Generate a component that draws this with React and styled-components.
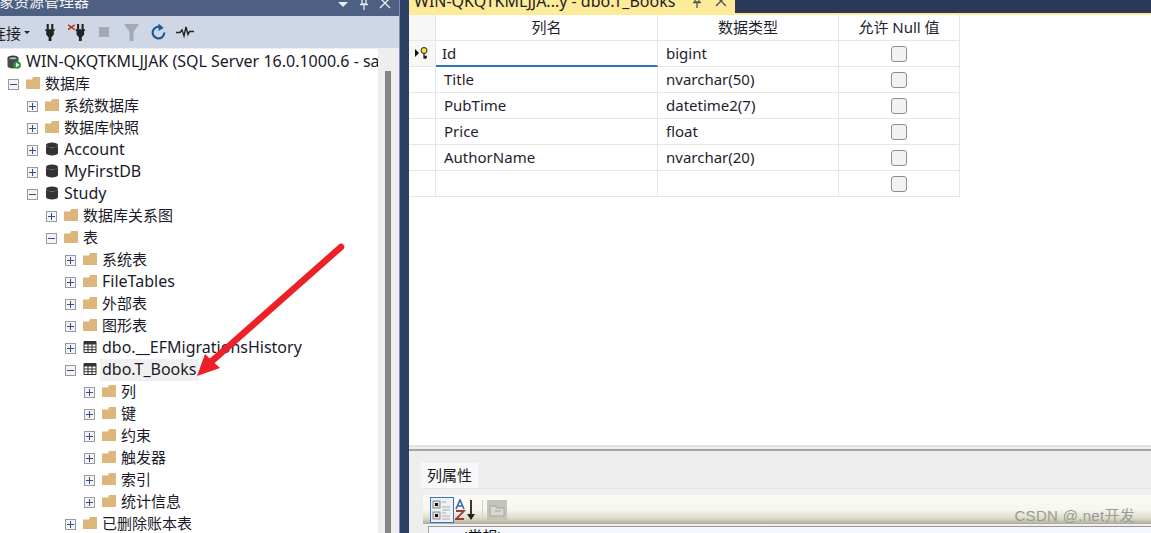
import React from "react";
import styled, { createGlobalStyle } from "styled-components";

const FONT = `"Noto Sans", "Noto Sans CJK SC", sans-serif`;
const Global = createGlobalStyle`
  html, body { margin: 0; padding: 0; background: #fff; overflow: hidden; }
  * { box-sizing: border-box; }
`;
const Page = styled.div`
  position: relative; display: flex; width: 1151px; height: 533px; overflow: hidden;
  font-family: ${FONT}; color: #1c1c1c; background: #2c3d5e;
`;
const Left = styled.aside`
  width: 400px; display: flex; flex-direction: column; border-right: 1px solid #7e8bab; background: #eeeeee;
`;
const TitleBar = styled.div`
  height: 16px; flex: none; background: #4d6082; color: #fff; display: flex; align-items: center;
  justify-content: space-between; overflow: hidden; font-size: 15px; line-height: 16px;
`;
const TitleText = styled.span`margin: -14px 0 0 -1px; color: #f0f2f6; white-space: nowrap;`;
const TitleBtns = styled.span`display: flex; align-items: flex-start; gap: 9px; margin: -6px 8px 0 0; height: 16px; color: #e8ebf2;`;
const Toolbar = styled.div`
  height: 32px; flex: none; background: #cfd6e5; display: flex; align-items: center; overflow: hidden;
`;
const Connect = styled.span`margin: 1px 3px 0 -9px; width: 30px; font-size: 15px; white-space: nowrap;`;
const Caret = styled.span`
  width: 0; height: 0; border-left: 3.5px solid transparent; border-right: 3.5px solid transparent;
  border-top: 3.5px solid #222; margin-right: 15px;
`;
const ToolIcon = styled.svg`flex: none; margin-right: ${p => p.$gap}px; display: block;`;
const TreeWrap = styled.div`flex: 1; display: flex; min-height: 0; margin-top: 1px;`;
const Tree = styled.div`width: 378px; background: #fff; padding-top: 2px; overflow: hidden;`;
const Scroll = styled.div`flex: 1; background: #eeeeee; padding: 22px 8px 0 7px;`;
const Thumb = styled.div`background: #868686; height: 100%;`;
const Row = styled.div`
  height: 22px; display: flex; align-items: center; white-space: nowrap;
  padding-left: ${p => p.$level * 19 - 11}px; color: #1a1a2a;
`;
const ServerRow = styled(Row)`padding-left: 7px;`;
const Expander = styled.span`
  width: 11px; height: 11px; flex: none; margin-right: 7px; border: 1px solid #9a9a9a; background: #f4f4f6;
  position: relative;
  &::before { content: ""; position: absolute; left: 1px; right: 1px; top: 4px; height: 1px; background: #2f4f8f; }
  &::after { content: ${p => (p.$open ? "none" : '""')}; position: absolute; top: 1px; bottom: 1px; left: 4px; width: 1px; background: #2f4f8f; }
`;
const NodeIcon = styled.svg`flex: none; width: 14px; height: 14px; margin: ${p => (p.$server ? "0 5px 0 0" : "-2px 5px 0 0")}; display: block;`;
const NodeText = styled.span`
  height: 22px; line-height: 21px; font-size: ${p => (p.$latin ? 16 : 15)}px;
  padding: 0 2px; margin-left: -2px;
  background: ${p => (p.$hl ? "#f0f0f0" : "transparent")};
`;
const Splitter = styled.div`width: 9px; flex: none; background: #2c3f63;`;
const Main = styled.main`flex: 1; display: flex; flex-direction: column; min-width: 0;`;
const TabStrip = styled.div`height: 13px; flex: none; background: #2b3a58; display: flex; overflow: hidden;`;
const DocTab = styled.div`
  width: 326px; background: #fdeb9a; color: #222; font-size: 16px; line-height: 13px; padding-left: 5px;
  display: flex; justify-content: space-between; white-space: nowrap; overflow: hidden;
`;
const DocText = styled.span`margin-top: -5px;`;
const DocBtns = styled.span`display: flex; gap: 12px; margin: -5px 8px 0 0; color: #555;`;
const TabLine = styled.div`height: 2px; flex: none; background: #fdeb9a;`;
const Designer = styled.div`flex: 1; background: #fff; min-height: 0; overflow: hidden;`;
const GridRow = styled.div`
  display: grid; grid-template-columns: 27px 222px 181px 121px; width: 551px; height: 26px; font-size: 15px;
`;
const Cell = styled.div`
  border-right: 1px solid #e6e6e6; border-bottom: ${p => (p.$sel ? "2px solid #2a75b5" : "1px solid #e6e6e6")};
  display: flex; align-items: center; padding-left: ${p => p.$pad || 0}px; padding-bottom: ${p => (p.$sel ? 1 : 2)}px; color: #1e1e2e;
  justify-content: ${p => (p.$center ? "center" : "flex-start")};
  background: ${p => (p.$shade ? "#f7f7f7" : "#fff")};
  white-space: nowrap;
`;
const CheckCell = styled(Cell)`padding-bottom: 0; justify-content: center;`;
const Check = styled.span`
  width: 16px; height: 16px; border: 1px solid #8e8e8e; border-radius: 3px; background: #f2f2f2;
`;
const Bottom = styled.section`
  height: 88px; flex: none; background: #eeeeee; border-top: 2px solid #e2e2e2; display: flex; flex-direction: column;
  overflow: hidden;
`;
const BottomRule = styled.div`height: 2px; flex: none; background: #a3a3a3; margin-top: 2px;`;
const PropTabs = styled.div`height: 37px; flex: none; display: flex; align-items: flex-end; padding-left: 11px;`;
const PropTab = styled.div`
  width: 59px; height: 26px; background: #f8f8f8; font-size: 15px; line-height: 25px; padding-left: 6px; color: #1a1a1a;
  border: 1px solid #f0f0f0; border-bottom: none;
`;
const PropBody = styled.div`
  flex: 1; margin-left: 14px; background: #f0f0f0; border-top: 1px solid #e4e4e4; padding-top: 6px; display: flex; flex-direction: column;
`;
const PropBar = styled.div`
  height: 29px; flex: none; padding-left: 7px; display: flex; align-items: center; gap: 1px;
  background: linear-gradient(#fbfbf6 0%, #f7f7ee 50%, #dddccb 80%, #aeac96 100%);
`;
const CatBtn = styled.span`
  width: 24px; height: 26px; border: 1px solid #3a72b8; background: #eef1f6; display: flex; align-items: center; justify-content: center;
`;
const Divider = styled.span`width: 1px; height: 20px; background: #cfcfc4; margin: 0 3px 0 4px;`;
const PropGrid = styled.div`
  flex: 1; margin: 2px 0 0 5px; background: #f3f7fb; border-left: 1px solid #a0a0a0; border-top: 1px solid #999;
  font-size: 15px; line-height: 15px; padding: 2px 0 0 34px; color: #111; overflow: hidden;
`;
const Watermark = styled.span`
  position: absolute; right: 16px; bottom: 7px; font-size: 15px; line-height: 20px; color: #9a9a9a; font-family: "Liberation Sans", "Noto Sans CJK SC", sans-serif;
  letter-spacing: 0.3px;
`;
const Arrow = styled.svg`position: absolute; left: 0; top: 0; pointer-events: none;`;

const Folder = () => (
  <NodeIcon viewBox="0 0 14 14">
    <path d="M0 3.5 L0 13 L14 13 L14 1 L7 1 L6 3.5 Z" fill="#dcb67a" />
  </NodeIcon>
);
const Db = () => (
  <NodeIcon viewBox="0 0 14 14">
    <ellipse cx="7" cy="3" rx="6" ry="2.5" fill="#333" />
    <path d="M1 3 V11 A6 2.5 0 0 0 13 11 V3 A6 2.5 0 0 1 1 3 Z" fill="#333" />
  </NodeIcon>
);
const TableIcon = () => (
  <NodeIcon viewBox="0 0 14 14">
    <path d="M1 1.5H13V12.5H1Z" fill="#fff" stroke="#333" />
    <path d="M1 2H13V4.5H1Z" fill="#333" />
    <path d="M1 7H13M1 9.7H13M5 2V12.5M9 2V12.5" stroke="#333" />
  </NodeIcon>
);
const Server = () => (
  <NodeIcon $server viewBox="0 0 14 14">
    <ellipse cx="6" cy="3" rx="5.5" ry="2.4" fill="#3a3a3a" />
    <path d="M.5 3V11A5.5 2.4 0 0 0 11.5 11V3Z" fill="#4a4a4a" />
    <ellipse cx="6" cy="3.2" rx="3.5" ry="1" fill="#bbb" />
    <circle cx="10.2" cy="10" r="3.8" fill="#2f9e3f" />
    <path d="M9 7.8L12.4 10L9 12.2Z" fill="#fff" />
  </NodeIcon>
);
const Plug = ({ x = 0 }) => (
  <g transform={`translate(${x} 0)`} fill="#222">
    <rect x="2.5" y="0" width="2.2" height="6" />
    <rect x="7.3" y="0" width="2.2" height="6" />
    <path d="M1 5.5H11V7.5H10V11.5L7.5 14V18H4.5V14L2 11.5V7.5H1Z" />
  </g>
);

const items = [
  [1, "open", "folder", "数据库"],
  [2, "plus", "folder", "系统数据库"],
  [2, "plus", "folder", "数据库快照"],
  [2, "plus", "db", "Account"],
  [2, "plus", "db", "MyFirstDB"],
  [2, "open", "db", "Study"],
  [3, "plus", "folder", "数据库关系图"],
  [3, "open", "folder", "表"],
  [4, "plus", "folder", "系统表"],
  [4, "plus", "folder", "FileTables"],
  [4, "plus", "folder", "外部表"],
  [4, "plus", "folder", "图形表"],
  [4, "plus", "table", "dbo.__EFMigrationsHistory"],
  [4, "open", "table", "dbo.T_Books", true],
  [5, "plus", "folder", "列"],
  [5, "plus", "folder", "键"],
  [5, "plus", "folder", "约束"],
  [5, "plus", "folder", "触发器"],
  [5, "plus", "folder", "索引"],
  [5, "plus", "folder", "统计信息"],
  [4, "plus", "folder", "已删除账本表"],
];
const icons = { folder: Folder, db: Db, table: TableIcon };

const columns = [
  ["Id", "bigint"],
  ["Title", "nvarchar(50)"],
  ["PubTime", "datetime2(7)"],
  ["Price", "float"],
  ["AuthorName", "nvarchar(20)"],
  ["", ""],
];

const Pin = () => (
  <svg width="12" height="14" viewBox="0 0 12 14">
    <path d="M3 1H9M4 1V7H8V1M2 7.5H10M6 8V13" stroke="currentColor" strokeWidth="1.3" fill="none" />
  </svg>
);
const Close = () => (
  <svg width="12" height="12" viewBox="0 0 12 12">
    <path d="M1 1L11 11M11 1L1 11" stroke="currentColor" strokeWidth="1.4" />
  </svg>
);

export default function App() {
  return (
    <Page>
      <Global />
      <Left>
        <TitleBar>
          <TitleText>象资源管理器</TitleText>
          <TitleBtns>
            <svg width="12" height="12" viewBox="0 0 12 12"><path d="M1 5H11L6 10Z" fill="currentColor" /></svg>
            <Pin />
            <Close />
          </TitleBtns>
        </TitleBar>
        <Toolbar>
          <Connect>连接</Connect>
          <Caret />
          <ToolIcon $gap={13} width="10" height="17" viewBox="1 0 10 18"><Plug /></ToolIcon>
          <ToolIcon $gap={12} width="19" height="17" viewBox="0 0 20 18">
            <Plug x={7} />
            <path d="M0 1L7 6M7 1L0 6" stroke="#b8321f" strokeWidth="1.5" />
          </ToolIcon>
          <ToolIcon $gap={15} width="10" height="10" viewBox="0 0 10 10"><rect width="10" height="10" fill="#a4a9b4" /></ToolIcon>
          <ToolIcon $gap={12} width="15" height="17" viewBox="0 0 15 17"><path d="M0 0H15L9.5 8V17H5.5V8Z" fill="#a4a9b4" /></ToolIcon>
          <ToolIcon $gap={10} width="15" height="18" viewBox="0 0 16 18">
            <path d="M11.5 4.5A6.2 6.2 0 1 0 14.2 9.5" fill="none" stroke="#1c5d96" strokeWidth="2.4" />
            <path d="M8 0L13.5 4.6L8 8Z" fill="#1c5d96" />
          </ToolIcon>
          <ToolIcon $gap={0} width="18" height="14" viewBox="0 0 18 14">
            <path d="M0 7.5H4L6 5L8 11L10 2L12 9.5L13.5 6.5H18" fill="none" stroke="#222" strokeWidth="1.4" />
          </ToolIcon>
        </Toolbar>
        <TreeWrap>
          <Tree>
            <ServerRow $level={1}>
              <Server />
              <NodeText $latin>WIN-QKQTKMLJJAK (SQL Server 16.0.1000.6 - sa</NodeText>
            </ServerRow>
            {items.map(([level, state, icon, label, hl]) => {
              const Icon = icons[icon];
              return (
                <Row key={label} $level={level}>
                  <Expander $open={state === "open"} />
                  <Icon />
                  <NodeText $hl={hl} $latin={/[a-z]/i.test(label)}>{label}</NodeText>
                </Row>
              );
            })}
          </Tree>
          <Scroll><Thumb /></Scroll>
        </TreeWrap>
      </Left>
      <Splitter />
      <Main>
        <TabStrip>
          <DocTab>
            <DocText>WIN-QKQTKMLJJA...y - dbo.T_Books</DocText>
            <DocBtns><Pin /><Close /></DocBtns>
          </DocTab>
        </TabStrip>
        <TabLine />
        <Designer>
          <GridRow>
            <Cell $shade />
            <Cell $center>列名</Cell>
            <Cell $center>数据类型</Cell>
            <Cell $center>允许 Null 值</Cell>
          </GridRow>
          {columns.map(([name, type], i) => (
            <GridRow key={i}>
              <Cell $center $shade={i === 0}>
                {i === 0 && (
                  <svg width="16" height="12" viewBox="0 0 16 12">
                    <path d="M1 2L5 6L1 10Z" fill="#111" />
                    <circle cx="10" cy="3.5" r="3" fill="#f4e23a" stroke="#222" />
                    <path d="M10 6V11.5M10 9.5H13M10 11H12.5" stroke="#222" strokeWidth="1.3" />
                  </svg>
                )}
              </Cell>
              <Cell $sel={i === 0} $pad={i === 0 ? 6 : 8}>{name}</Cell>
              <Cell $pad={8}>{type}</Cell>
              <CheckCell><Check /></CheckCell>
            </GridRow>
          ))}
        </Designer>
        <Bottom>
          <BottomRule />
          <PropTabs><PropTab>列属性</PropTab></PropTabs>
          <PropBody>
            <PropBar>
              <CatBtn>
                <svg width="20" height="22" viewBox="0 0 20 22">
                  <rect x="1" y="2" width="7" height="7" fill="#ddd" stroke="#888" />
                  <rect x="1" y="13" width="7" height="7" fill="#ddd" stroke="#888" />
                  <rect x="3" y="4" width="3" height="3" fill="#111" />
                  <rect x="3" y="15" width="3" height="3" fill="#111" />
                  <path d="M10 3H14M10 8H18M10 11H18M10 14H14M10 17H18M10 20H18" stroke="#aaa" />
                </svg>
              </CatBtn>
              <svg width="22" height="22" viewBox="0 0 22 22">
                <path d="M1 10L5 1L9 10M2.5 7H7.5" fill="none" stroke="#3a66b5" strokeWidth="1.6" />
                <path d="M1 12H9L1 20H9" fill="none" stroke="#a03a3a" strokeWidth="1.8" />
                <path d="M16 1V18" stroke="#222" strokeWidth="1.8" />
                <path d="M12 15H20L16 21Z" fill="#222" />
              </svg>
              <Divider />
              <svg width="20" height="20" viewBox="0 0 20 20">
                <rect width="20" height="20" fill="#c4c4bd" />
                <path d="M3 6H9L10 8H17V16H3Z" fill="#d8d8d2" stroke="#a8a8a0" />
                <path d="M8 11H14" stroke="#a8a8a0" />
              </svg>
            </PropBar>
            <PropGrid>(常规)</PropGrid>
          </PropBody>
        </Bottom>
      </Main>
      <Watermark>CSDN @.net开发</Watermark>
      <Arrow width="1151" height="533" viewBox="0 0 1151 533">
        <path d="M341 247L212 361" stroke="#ee2027" strokeWidth="6.5" strokeLinecap="round" fill="none" />
        <path d="M197 376L205 354L220 368Z" fill="#ee2027" />
      </Arrow>
    </Page>
  );
}
